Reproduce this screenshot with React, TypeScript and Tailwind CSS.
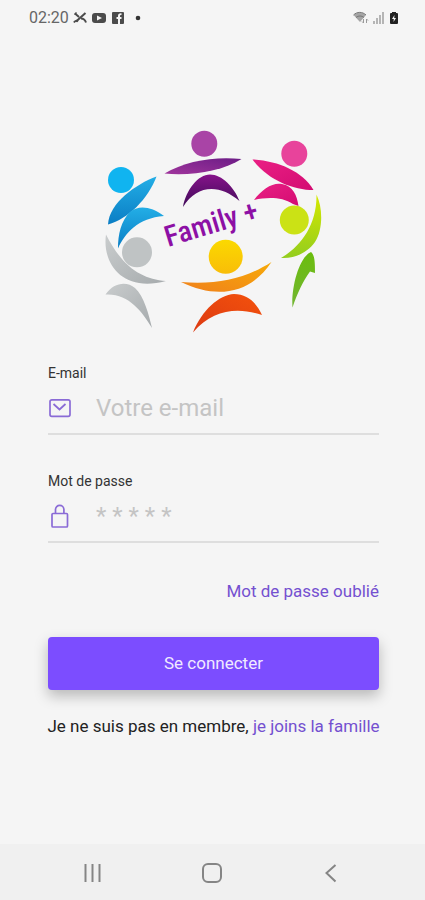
import type { ReactNode } from "react";

type FieldProps = {
  id: string;
  label: string;
  type: string;
  placeholder: string;
  icon: ReactNode;
};

function StatusBar() {
  return (
    <header className="flex h-9 items-center justify-between pr-[26px] pl-[29px] text-[#666]">
      <div className="flex items-center gap-1">
        <span className="text-base leading-5">02:20</span>
        <svg className="h-3.5 w-3.5" viewBox="0 0 14 14" fill="none" stroke="#4b4b4b" strokeWidth="2">
          <path d="M2 2.500 6 6M12.500 2 3 10.500" />
          <path d="M1 11.500c1-2 3-2 4-1M8 7.500c2 0 4 1 5 4" />
          <path d="M1.500 3.500 3.500 1.500" strokeWidth="1.500" />
        </svg>
        <svg className="h-3.5 w-4" viewBox="0 0 16 14">
          <rect x="1" y="2" width="14" height="10" rx="3" fill="#4b4b4b" />
          <path d="M6 4.500v5l5-2.500z" fill="#f5f5f5" />
        </svg>
        <svg className="h-3.5 w-3.5" viewBox="0 0 14 14">
          <rect x="1" y="1" width="12" height="12" rx="1" fill="#4b4b4b" />
          <path d="M7 13V8H5.500V6H7V5c0-2 1-3 3.500-2.800V4C9.300 4 9 4.200 9 5v1h1.500v2H9v5z" fill="#f5f5f5" />
        </svg>
        <svg className="ml-1 h-3.5 w-3" viewBox="0 0 12 14">
          <circle cx="5" cy="7" r="2.300" fill="#333" />
        </svg>
      </div>
      <div className="flex items-center gap-1">
        <svg className="h-3.5 w-4" viewBox="0 0 16 14">
          <path d="M0.500 4C4 0.500 9.500 0.500 13 4L7 11z" fill="#a5a5a5" />
          <path d="M0.500 4C4 0.500 9.500 0.500 13 4M3 6.500c2.500-2 5.500-2 8 0" fill="none" stroke="#777" />
          <path d="M10.500 8v4M9 10.500l1.500 1.500M13.500 12V8M15 9.500 13.500 8" fill="none" stroke="#999" />
        </svg>
        <svg className="h-3.5 w-3" viewBox="0 0 12 14" fill="#b5b5b5">
          <rect x="0" y="10" width="2" height="3" />
          <rect x="3" y="7" width="2" height="6" />
          <rect x="6" y="4" width="2" height="9" />
          <rect x="9" y="1" width="2" height="12" />
        </svg>
        <svg className="h-3.5 w-2.5" viewBox="0 0 10 14">
          <path d="M3 1h4v1h1q1 0 1 1v9q0 1-1 1H2q-1 0-1-1V3q0-1 1-1h1z" fill="#222" />
          <path d="M5.500 4 3 8h1.800L4.500 11 7 7H5.200z" fill="#f5f5f5" />
        </svg>
      </div>
    </header>
  );
}

function Logo() {
  return (
    <svg className="mx-auto mt-[89px] h-[210px] w-[235px]" viewBox="95 125 235 210" role="img" aria-label="Family +">
      <defs>
        <linearGradient id="blue" x1="0" y1="0" x2="0" y2="1">
          <stop offset="0" stopColor="#23aee6" />
          <stop offset="1" stopColor="#0a7dc4" />
        </linearGradient>
        <linearGradient id="purple" x1="0" y1="1" x2="1" y2="0">
          <stop offset="0" stopColor="#a0359c" />
          <stop offset="1" stopColor="#6c1c86" />
        </linearGradient>
        <linearGradient id="violet" x1="0" y1="0" x2="0" y2="1">
          <stop offset="0" stopColor="#86138a" />
          <stop offset="1" stopColor="#3f0b58" />
        </linearGradient>
        <linearGradient id="pink" x1="0" y1="0" x2="1" y2="1">
          <stop offset="0" stopColor="#ea1f84" />
          <stop offset="1" stopColor="#d30c72" />
        </linearGradient>
        <linearGradient id="lime" x1="0" y1="0" x2="0" y2="1">
          <stop offset="0" stopColor="#d5e800" />
          <stop offset="1" stopColor="#93cd1e" />
        </linearGradient>
        <linearGradient id="green" x1="0" y1="0" x2="0" y2="1">
          <stop offset="0" stopColor="#6bbd0d" />
          <stop offset="1" stopColor="#72b532" />
        </linearGradient>
        <linearGradient id="gray" x1="0" y1="0" x2="1" y2="1">
          <stop offset="0" stopColor="#c9cccd" />
          <stop offset="1" stopColor="#a6abad" />
        </linearGradient>
        <linearGradient id="orange" x1="0" y1="1" x2="1" y2="0">
          <stop offset="0" stopColor="#f0801c" />
          <stop offset="1" stopColor="#f7ab08" />
        </linearGradient>
        <linearGradient id="red" x1="1" y1="0" x2="0" y2="1">
          <stop offset="0" stopColor="#f4520c" />
          <stop offset="1" stopColor="#dc3a12" />
        </linearGradient>
        <linearGradient id="sun" x1="0" y1="0" x2="0" y2="1">
          <stop offset="0" stopColor="#fbd900" />
          <stop offset="1" stopColor="#f9bd08" />
        </linearGradient>
      </defs>

      <circle cx="121" cy="180" r="13" fill="#10b4f0" />
      <path d="M156.500 176.500C136 184 109 203 108 224.500C128 219 148 199 156.500 176.500Z" fill="url(#blue)" />
      <path d="M164 216C151 206 138 205 130 212C121 221 118 234 118 248.500C125 233 138 218 164 216Z" fill="url(#blue)" />

      <circle cx="204.300" cy="143.700" r="13" fill="#a944a6" />
      <path d="M164.500 173.500C185 161 215 156 241.500 159C223 171 192 176 164.500 173.500Z" fill="url(#purple)" />
      <path d="M183 207C186 190 198 174.500 210 174.500C222 174.500 234 187 239.500 201C220 184 197 184 183 207Z" fill="url(#violet)" />

      <circle cx="294.300" cy="153.700" r="13" fill="#e8439b" />
      <path d="M252.500 159.500C278 161 302 171 313.500 190C293 190 268 180 252.500 159.500Z" fill="url(#pink)" />
      <path d="M254 200C262 189 273 182 282 184C293 186 297 195 298.500 206L293 204C282 197 268 197 254 200Z" fill="url(#pink)" />

      <path d="M316.500 194.500C323 208 323 230 315 242C308 252 295 259 281 258C300 247 317 226 316.500 194.500Z" fill="url(#lime)" />
      <circle cx="294.300" cy="220" r="14.500" fill="#cbe215" />
      <path d="M311 252C315 255 315 264 315 273L310 271.500C303 281 297 294 292.500 307.500C291 288 299 257 311 252Z" fill="url(#green)" />

      <circle cx="137" cy="252.300" r="15" fill="#bfc3c4" />
      <path d="M106 234.500C102 262 121 293 166 281C142 279 123 268 106 234.500Z" fill="url(#gray)" />
      <path d="M105.500 294.500C114 282 127 281 135 288C144 296 149 315 152 328C142 311 128 293 105.500 294.500Z" fill="url(#gray)" />

      <path d="M181 282C216 285 245 279 271.500 262C251 293 218 300 181 282Z" fill="url(#orange)" />
      <circle cx="225.700" cy="256.700" r="17" fill="url(#sun)" />
      <path d="M193 332.500C202 310 219 295 234 294C247 294 256 302 262 315C238 307 213 309 193 332.500Z" fill="url(#red)" />

      <text
        transform="translate(168 247) rotate(-17)"
        className="font-['Roboto_Condensed','Liberation_Sans_Narrow',Roboto,sans-serif] text-[29px] font-medium"
        fill="#8d10a5"
      >
        Family +
      </text>
    </svg>
  );
}

function MailIcon() {
  return (
    <svg className="h-6 w-6 shrink-0" viewBox="0 0 24 24" fill="none" stroke="#8a6bd6" strokeWidth="1.700">
      <rect x="2" y="3.800" width="20" height="16.500" rx="1.800" />
      <path d="m5.500 8 6 5.500 6-5.500" />
    </svg>
  );
}

function LockIcon() {
  return (
    <svg className="h-6 w-6 shrink-0" viewBox="0 0 24 24" fill="none" stroke="#8a6bd6" strokeWidth="1.700">
      <rect x="4" y="9.500" width="15.500" height="13.500" rx="1" />
      <path d="M7.500 9.500V5.500a4.200 4.200 0 0 1 8.400 0v4" />
    </svg>
  );
}

function Field({ id, label, type, placeholder, icon }: FieldProps) {
  return (
    <div>
      <label htmlFor={id} className="block text-sm leading-5 text-[#333]">
        {label}
      </label>
      <div className="flex h-[52px] items-center gap-6 border-b-2 border-[#dedede]">
        {icon}
        <input
          id={id}
          type={type}
          placeholder={placeholder}
          className="w-full min-w-0 bg-transparent text-2xl text-[#333] outline-none placeholder:text-[#c4c4c4]"
        />
      </div>
    </div>
  );
}

function NavigationBar() {
  return (
    <nav className="flex h-14 items-center justify-between bg-[#f0f0f0] px-20 text-[#858585]">
      <button type="button" aria-label="Applications récentes">
        <svg className="h-6 w-6" viewBox="0 0 24 24" fill="none" stroke="currentColor" strokeWidth="2">
          <path d="M5.500 4v18M12.500 4v18M19.500 4v18" />
        </svg>
      </button>
      <button type="button" aria-label="Accueil">
        <svg className="h-6 w-6" viewBox="0 0 24 24" fill="none" stroke="currentColor" strokeWidth="2">
          <rect x="2" y="4" width="18" height="18" rx="5" />
        </svg>
      </button>
      <button type="button" aria-label="Retour">
        <svg className="h-6 w-6" viewBox="0 0 24 24" fill="none" stroke="currentColor" strokeWidth="2">
          <path d="m14.500 5-9 8 9 8.500" />
        </svg>
      </button>
    </nav>
  );
}

export default function App() {
  return (
    <div className="flex min-h-screen flex-col bg-[#f5f5f5] font-[Roboto,sans-serif]">
      <StatusBar />
      <main className="flex-1">
        <Logo />
        <form className="mt-7 pr-[46px] pl-12" onSubmit={(e) => e.preventDefault()}>
          <div className="space-y-9">
            <Field id="email" label="E-mail" type="email" placeholder="Votre e-mail" icon={<MailIcon />} />
            <Field id="password" label="Mot de passe" type="password" placeholder="* * * * *" icon={<LockIcon />} />
          </div>
          <div className="mt-9 text-right text-[17px] leading-6">
            <a href="#oublie" className="text-[#7450d0]">
              Mot de passe oublié
            </a>
          </div>
          <button
            type="submit"
            className="mt-[34px] h-[53px] w-full rounded-sm bg-[#7c4dff] text-[17px] text-[#f0eaff] shadow-[0_6px_14px_rgba(0,0,0,0.25)]"
          >
            Se connecter
          </button>
          <p className="-mx-2 mt-6 text-center text-[17px] leading-6 text-[#222]">
            Je ne suis pas en membre,{" "}
            <a href="#inscription" className="text-[#7450d0]">
              je joins la famille
            </a>
          </p>
        </form>
      </main>
      <NavigationBar />
    </div>
  );
}
